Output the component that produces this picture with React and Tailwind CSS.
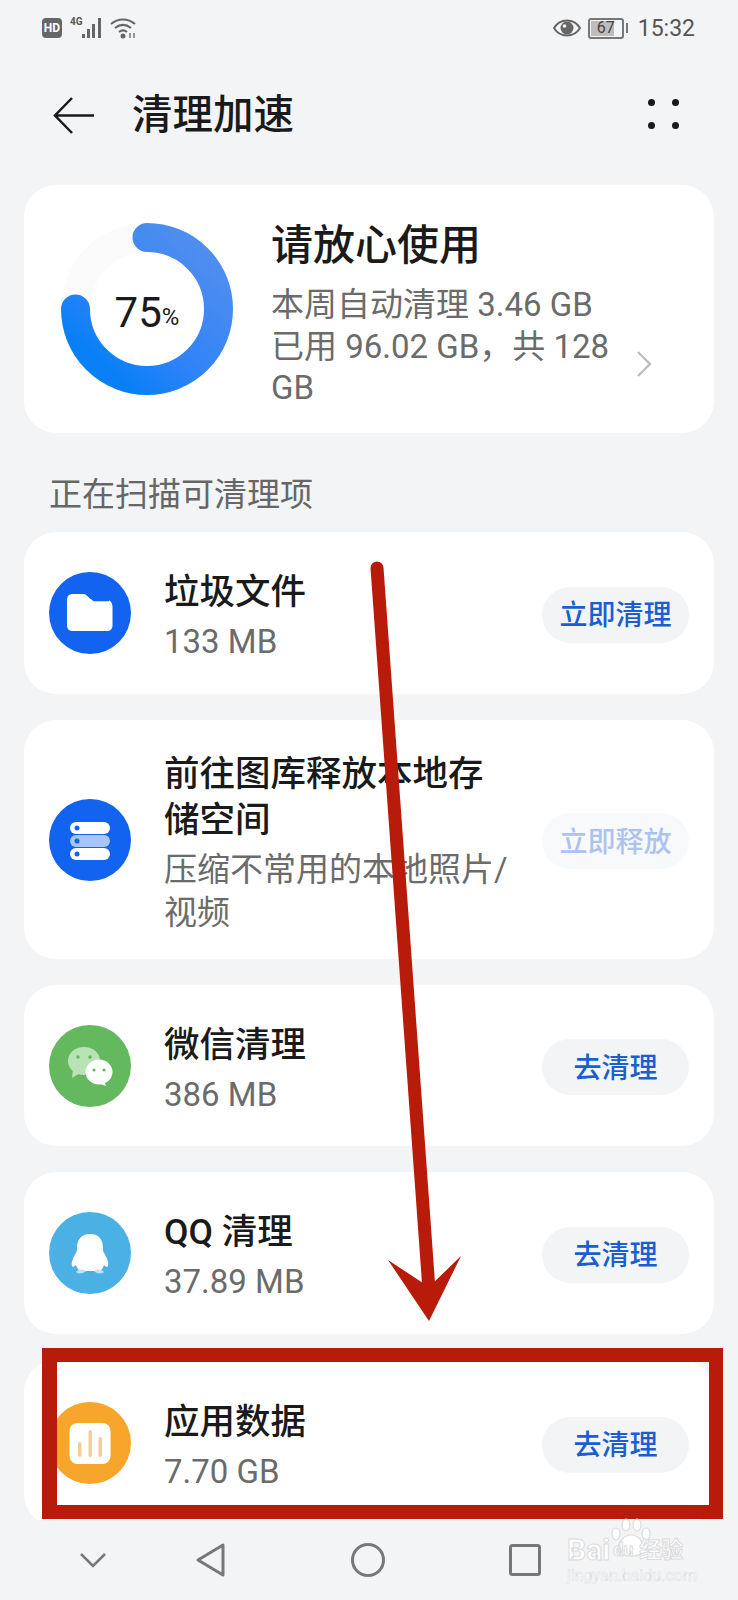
import React from 'react';

const FolderIcon = () => (
    <svg viewBox="0 0 82 82" className="w-full h-full">
        <path d="M24 22h10c2 0 3 .5 4.500 2l3 3h14c5 0 8 3 8 8v18c0 4-2 6-6 6H24c-4 0-6-2-6-6V28c0-4 2-6 6-6z" fill="#fff" />
        <path d="M38 22l7 6h15" fill="none" stroke="#1263f0" strokeWidth="2.500" />
    </svg>
);

const StorageIcon = () => (
    <svg viewBox="0 0 82 82" className="w-full h-full">
        <rect x="21" y="23" width="40" height="12" rx="6" fill="#fff" />
        <rect x="21" y="36" width="40" height="12" rx="6" fill="#a9c4f6" />
        <rect x="21" y="49" width="40" height="12" rx="6" fill="#fff" />
        <circle cx="28" cy="29" r="2.500" fill="#1263f0" />
        <circle cx="28" cy="42" r="2.500" fill="#1263f0" />
        <circle cx="28" cy="55" r="2.500" fill="#1263f0" />
    </svg>
);

const WechatIcon = () => (
    <svg viewBox="0 0 82 82" className="w-full h-full">
        <ellipse cx="35" cy="36" rx="16" ry="14" fill="#b9e2b5" />
        <path d="M24 44l-1 9 8-5z" fill="#b9e2b5" />
        <circle cx="29" cy="32" r="1.800" fill="#64b95f" />
        <circle cx="41" cy="32" r="1.800" fill="#64b95f" />
        <ellipse cx="50" cy="47" rx="13.500" ry="12.500" fill="#fff" />
        <path d="M55 56l2 5-8-3z" fill="#fff" />
        <circle cx="45" cy="45" r="1.600" fill="#64b95f" />
        <circle cx="55" cy="45" r="1.600" fill="#64b95f" />
    </svg>
);

const QqIcon = () => (
    <svg viewBox="0 0 82 82" className="w-full h-full">
        <path d="M41 22c-9 0-13 6-13 14 0 2 0 3-1 5-3 5-5 9-4 13 1 2 3 0 4-1 1 3 2 4 4 6h20c2-2 3-3 4-6 1 1 3 3 4 1 1-4-1-8-4-13-1-2-1-3-1-5 0-8-4-14-13-14z" fill="#fff" />
        <path d="M27 60c3-3 7-3 10-1-2 3-9 3-10 1zM55 60c-3-3-7-3-10-1 2 3 9 3 10 1z" fill="#bfe3f5" />
    </svg>
);

const ChartIcon = () => (
    <svg viewBox="0 0 82 82" className="w-full h-full">
        <rect x="20.500" y="21" width="41" height="41" rx="8" fill="#fff" />
        <rect x="29" y="40" width="3.500" height="15" rx="1.700" fill="#f9cd92" />
        <rect x="39.500" y="28" width="3.500" height="27" rx="1.700" fill="#f9cd92" />
        <rect x="49.500" y="35" width="3.500" height="20" rx="1.700" fill="#f9cd92" />
    </svg>
);

const rows = [
    { name: '垃圾文件', size: '133 MB', action: '立即清理', bg: 'bg-[#1263f0]', icon: <FolderIcon />, h: 'h-[162px]' },
    { name: '前往图库释放本地存储空间', size: '压缩不常用的本地照片/视频', action: '立即释放', bg: 'bg-[#1263f0]', icon: <StorageIcon />, h: 'h-[239px]', faded: true },
    { name: '微信清理', size: '386 MB', action: '去清理', bg: 'bg-[#64b95f]', icon: <WechatIcon />, h: 'h-[161px]' },
    { name: 'QQ 清理', size: '37.89 MB', action: '去清理', bg: 'bg-[#4bb0e4]', icon: <QqIcon />, h: 'h-[162px]' },
    { name: '应用数据', size: '7.70 GB', action: '去清理', bg: 'bg-[#f8a62b]', icon: <ChartIcon />, h: 'h-[166px]' },
];

const StatusBar = () => (
    <div className="h-[56px] flex items-center justify-between pl-[42px] pr-[43px] text-[#555]">
        <div className="flex items-center">
            <span className="w-[20px] h-[20px] rounded-[4px] bg-[#666] text-white text-[12px] font-bold flex items-center justify-center">HD</span>
            <span className="ml-[8px] mb-[12px] text-[10px] leading-none font-bold w-[12px]">4G</span>
            <svg width="24" height="22" viewBox="0 0 24 22">
                <rect x="0" y="17" width="3" height="4" fill="#666" />
                <rect x="5" y="12" width="3" height="9" fill="#666" />
                <rect x="10" y="7" width="3" height="14" fill="#666" />
                <rect x="16" y="1" width="3" height="20" fill="#666" />
            </svg>
            <svg width="28" height="22" viewBox="0 0 28 22" className="ml-[3px]">
                <path d="M2 7c7-6 17-6 24 0M6 11c5-4 11-4 16 0M10 15c2.500-2 5.500-2 8 0" fill="none" stroke="#666" strokeWidth="2.200" />
                <circle cx="14" cy="19" r="2.500" fill="#666" />
                <path d="M21 16v5M25 16v5" stroke="#777" strokeWidth="1.500" />
            </svg>
        </div>
        <div className="flex items-center">
            <svg width="28" height="18" viewBox="0 0 28 18">
                <path d="M1 9c6-10 20-10 26 0-6 10-20 10-26 0z" fill="none" stroke="#666" strokeWidth="2" />
                <circle cx="14" cy="9" r="6.500" fill="#666" />
                <circle cx="11.500" cy="7" r="1.800" fill="#f3f4f6" />
            </svg>
            <div className="ml-[7px] w-[36px] h-[21px] border-2 border-[#777] rounded-[3px] p-[1px] relative">
                <div className="w-[23px] h-full bg-[#bdbdbd]"></div>
                <span className="absolute inset-0 flex items-center justify-center text-[16px] leading-none text-[#444]">67</span>
            </div>
            <div className="ml-[2px] w-[2px] h-[10px] bg-[#777]"></div>
            <span className="ml-[10px] text-[23px] leading-none">15:32</span>
        </div>
    </div>
);

const Header = () => (
    <div className="h-[129px] flex items-center pl-[53px] pr-[59px] pb-[11px]">
        <svg width="41" height="37" viewBox="0 0 41 37">
            <path d="M19 1L2 18.500 19 36M2 18.500h39" fill="none" stroke="#1a1a1a" strokeWidth="2.500" />
        </svg>
        <h1 className="ml-[38px] text-[40.500px] leading-none font-medium text-[#1a1a1a]">清理加速</h1>
        <div className="ml-auto grid grid-cols-2 gap-x-[17px] gap-y-[16px] -mt-[3px]">
            <span className="w-[7px] h-[7px] rounded-full bg-[#1a1a1a]"></span>
            <span className="w-[7px] h-[7px] rounded-full bg-[#1a1a1a]"></span>
            <span className="w-[7px] h-[7px] rounded-full bg-[#1a1a1a]"></span>
            <span className="w-[7px] h-[7px] rounded-full bg-[#1a1a1a]"></span>
        </div>
    </div>
);

const SummaryCard = () => (
    <div className="h-[248px] rounded-[32px] bg-white flex items-center pl-[37px] pr-[62px]">
        <div className="relative w-[172px] h-[172px] shrink-0">
            <svg width="172" height="172" viewBox="0 0 172 172">
                <defs>
                    <linearGradient id="ring" x1="0.800" y1="0" x2="0.100" y2="0.800">
                        <stop offset="0" stopColor="#4f8eee" />
                        <stop offset="0.650" stopColor="#2f83f8" />
                        <stop offset="1" stopColor="#0a80f6" />
                    </linearGradient>
                </defs>
                <circle cx="86" cy="86" r="71.500" fill="none" stroke="#fbfbfb" strokeWidth="29" />
                <path d="M86 14.500A71.500 71.500 0 1 1 14.500 86" fill="none" stroke="url(#ring)" strokeWidth="29" strokeLinecap="round" />
            </svg>
            <div className="absolute inset-0 flex items-center justify-center pt-[8px] text-[#1a1a1a]">
                <span className="text-[42px] leading-none">75</span>
                <span className="text-[24px] leading-none mt-[8px]">%</span>
            </div>
        </div>
        <div className="ml-[38px] flex-1 pt-[10px] -mr-[18px]">
            <div className="text-[42px] leading-[50px] font-medium text-[#1a1a1a]">请放心使用</div>
            <div className="mt-[12px] text-[33px] leading-[43px] text-[#6b6b6b]">本周自动清理 3.46 GB</div>
            <div className="text-[33px] leading-[41px] text-[#6b6b6b]">已用 96.02 GB，共 128 GB</div>
        </div>
        <svg width="16" height="26" viewBox="0 0 16 26" className="shrink-0 self-end mb-[56px]">
            <path d="M2 1l12 12L2 25" fill="none" stroke="#bbb" strokeWidth="2.200" />
        </svg>
    </div>
);

const Row = ({ row }) => (
    <div className={`${row.h} shrink-0 rounded-[32px] bg-white flex items-center pl-[25px] pr-[23px]`}>
        <div className={`w-[82px] h-[82px] rounded-full shrink-0 ${row.bg}`}>{row.icon}</div>
        <div className="ml-[33px] w-[345px] shrink-0 pt-[6px]">
            <div className="text-[35.500px] leading-[46px] font-medium text-[#1a1a1a]">{row.name}</div>
            <div className="mt-[5px] text-[33px] leading-[43px] text-[#6b6b6b]">{row.size}</div>
        </div>
        <button className={`ml-auto mr-[2px] mt-[3px] pt-[3px] w-[147px] h-[56px] rounded-full text-[28px] font-medium flex items-center justify-center ${row.faded ? 'bg-[#f8f9fa] text-[#abc4ef]' : 'bg-[#f3f4f5] text-[#1a5fd0]'}`}>
            {row.action}
        </button>
    </div>
);

const NavBar = () => (
    <div className="h-[80px] shrink-0 flex items-center pl-[79px] bg-[#f3f4f6]">
        <svg width="28" height="16" viewBox="0 0 28 16">
            <path d="M2 2l12 12L26 2" fill="none" stroke="#777" strokeWidth="2.500" />
        </svg>
        <svg width="32" height="36" viewBox="0 0 32 36" className="ml-[88px]">
            <path d="M28 3L3 18l25 15z" fill="none" stroke="#777" strokeWidth="3" strokeLinejoin="round" />
        </svg>
        <svg width="36" height="36" viewBox="0 0 36 36" className="ml-[123px]">
            <circle cx="18" cy="18" r="15.500" fill="none" stroke="#777" strokeWidth="3" />
        </svg>
        <svg width="32" height="32" viewBox="0 0 32 32" className="ml-[123px]">
            <rect x="1.500" y="1.500" width="29" height="29" rx="2" fill="none" stroke="#777" strokeWidth="3" />
        </svg>
    </div>
);

const Watermark = () => (
    <div className="absolute left-[567px] top-[1518px] w-[132px] text-white [-webkit-text-stroke:1px_#dcdcdc]">
        <svg width="44" height="40" viewBox="0 0 44 40" className="absolute left-[42px] top-[0px]">
            <g fill="#fff" stroke="#dcdcdc" strokeWidth="1.200">
                <ellipse cx="7" cy="16" rx="4" ry="6" />
                <ellipse cx="17" cy="7" rx="4" ry="6" />
                <ellipse cx="28" cy="7" rx="4" ry="6" />
                <ellipse cx="37" cy="16" rx="4" ry="6" />
                <path d="M22 17c-7 0-13 7-13 14 0 6 7 7 13 7s13-1 13-7c0-7-6-14-13-14z" />
            </g>
        </svg>
        <div className="relative mt-[17px] flex items-center text-[30px] leading-[30px] font-bold">
            <span>Bai</span>
            <span className="ml-[3px] text-[18px]">du</span>
            <span className="ml-[6px] text-[22px] leading-none">经验</span>
        </div>
        <div className="text-[16px] leading-[16px] mt-[3px] [-webkit-text-stroke:0.500px_#dcdcdc]">jingyan.baidu.com</div>
    </div>
);

const App = () => {
    return (
        <div className="relative w-[738px] h-[1600px] overflow-hidden flex flex-col bg-[#f3f4f6] font-[Roboto,'Noto_Sans_CJK_SC',sans-serif]">
            <StatusBar />
            <Header />
            <div className="flex-1 min-h-0 overflow-hidden px-[24px]">
                <SummaryCard />
                <div className="h-[99px] pl-[25px] pt-[37px] text-[33px] leading-[50px] text-[#666]">正在扫描可清理项</div>
                <div className="flex flex-col gap-[26px]">
                    {rows.map((row) => (
                        <Row key={row.name} row={row} />
                    ))}
                </div>
            </div>
            <NavBar />

            {/* red markup drawn on top of the screenshot */}
            <svg width="738" height="1600" viewBox="0 0 738 1600" className="absolute inset-0 pointer-events-none">
                <path d="M377 568L429 1290" stroke="#b91b0b" strokeWidth="13" strokeLinecap="round" />
                <path d="M388 1260L429 1287L461 1256L429 1321z" fill="#b91b0b" />
            </svg>
            <div className="absolute left-[42px] top-[1348px] w-[681px] h-[171px] border-[14px] border-l-[15px] border-[#b91b0b] pointer-events-none"></div>
            <Watermark />
        </div>
    );
};

export default App;
